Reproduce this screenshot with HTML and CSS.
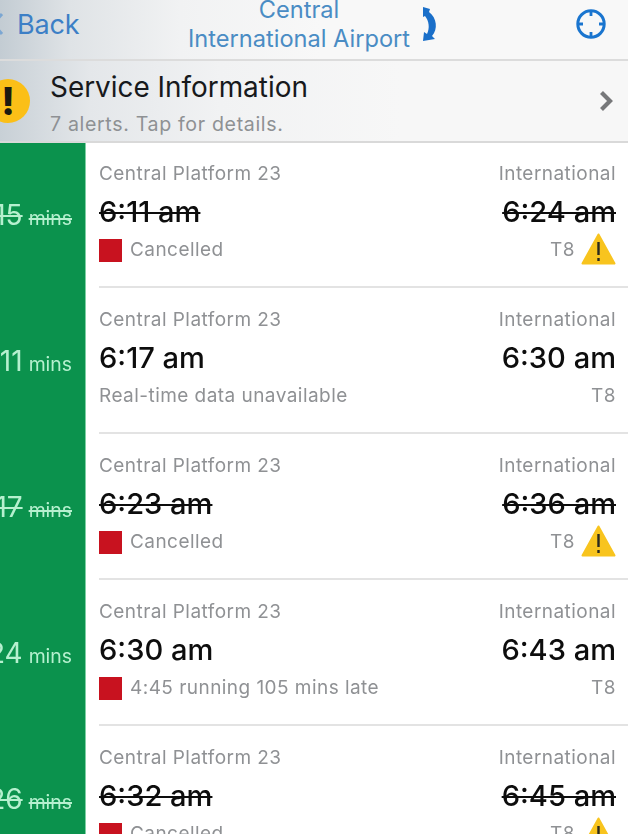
FILE: index.html
```html
<!DOCTYPE html>
<html lang="en">
<head>
<meta charset="utf-8">
<title>Central to International Airport</title>
<link rel="stylesheet" href="styles.css">
</head>
<body>
<div class="page">
  <header class="nav">
    <div class="back">
      <svg class="back-chevron" width="8" height="30" viewBox="0 0 8 30"><path d="M2 5 L-7 15 L2 25" fill="none" stroke="#7ba6d2" stroke-width="3"/></svg>
      <span>Back</span>
    </div>
    <div class="title-wrap">
      <div class="title"><span>Central</span><span>International Airport</span></div>
      <svg class="swap" width="16" height="36" viewBox="0 0 16 36"><path d="M1 1 L8 3 L7 6 C15 12 16 23 10 30 L13 33 L1 35 L2 26 L5 28 C8 22 7 15 3 10 L1 11 Z" fill="#1a6fc9"/></svg>
    </div>
    <svg class="locate" width="32" height="32" viewBox="0 0 32 32"><circle cx="16" cy="16" r="13.2" fill="none" stroke="#1a75cf" stroke-width="3"/><path d="M16 2 V8 M16 24 V30 M2 16 H8 M24 16 H30" stroke="#1a75cf" stroke-width="2.8"/></svg>
  </header>
  <section class="service">
    <div class="alert-icon">!</div>
    <div class="service-text">
      <div class="service-title">Service Information</div>
      <div class="service-sub">7 alerts. Tap for details.</div>
    </div>
    <svg class="chevron" width="14" height="22" viewBox="0 0 14 22"><path d="M2.5 2.5 L11 11 L2.5 19.5" fill="none" stroke="#77787a" stroke-width="4.2"/></svg>
  </section>
  <main class="list">
    <article class="row">
      <div class="mins cancelled"><b>15</b> <small>mins</small></div>
      <div class="info">
        <div class="line small"><span>Central Platform 23</span><span>International</span></div>
        <div class="line time cancelled"><span>6:11 am</span><span>6:24 am</span></div>
        <div class="line small status">
          <span class="stat"><i class="square"></i>Cancelled</span>
          <span class="stat">T8<svg class="warn" width="35" height="32" viewBox="0 0 35 32"><path d="M17.5 1.5 L33.5 30.5 H1.5 Z" fill="#f8c41e" stroke="#f8c41e" stroke-width="2" stroke-linejoin="round"/><path d="M17.5 9 V22 M17.5 25 V28" stroke="#2a2a20" stroke-width="2.4"/></svg></span>
        </div>
      </div>
    </article>
    <article class="row">
      <div class="mins"><b>11</b> <small>mins</small></div>
      <div class="info">
        <div class="line small"><span>Central Platform 23</span><span>International</span></div>
        <div class="line time"><span>6:17 am</span><span>6:30 am</span></div>
        <div class="line small status">
          <span class="stat">Real-time data unavailable</span>
          <span class="stat">T8</span>
        </div>
      </div>
    </article>
    <article class="row">
      <div class="mins cancelled"><b>17</b> <small>mins</small></div>
      <div class="info">
        <div class="line small"><span>Central Platform 23</span><span>International</span></div>
        <div class="line time cancelled"><span>6:23 am</span><span>6:36 am</span></div>
        <div class="line small status">
          <span class="stat"><i class="square"></i>Cancelled</span>
          <span class="stat">T8<svg class="warn" width="35" height="32" viewBox="0 0 35 32"><path d="M17.5 1.5 L33.5 30.5 H1.5 Z" fill="#f8c41e" stroke="#f8c41e" stroke-width="2" stroke-linejoin="round"/><path d="M17.5 9 V22 M17.5 25 V28" stroke="#2a2a20" stroke-width="2.4"/></svg></span>
        </div>
      </div>
    </article>
    <article class="row">
      <div class="mins"><b>24</b> <small>mins</small></div>
      <div class="info">
        <div class="line small"><span>Central Platform 23</span><span>International</span></div>
        <div class="line time"><span>6:30 am</span><span>6:43 am</span></div>
        <div class="line small status">
          <span class="stat"><i class="square"></i>4:45 running 105 mins late</span>
          <span class="stat">T8</span>
        </div>
      </div>
    </article>
    <article class="row">
      <div class="mins cancelled"><b>26</b> <small>mins</small></div>
      <div class="info">
        <div class="line small"><span>Central Platform 23</span><span>International</span></div>
        <div class="line time cancelled"><span>6:32 am</span><span>6:45 am</span></div>
        <div class="line small status">
          <span class="stat"><i class="square"></i>Cancelled</span>
          <span class="stat">T8<svg class="warn" width="35" height="32" viewBox="0 0 35 32"><path d="M17.5 1.5 L33.5 30.5 H1.5 Z" fill="#f8c41e" stroke="#f8c41e" stroke-width="2" stroke-linejoin="round"/><path d="M17.5 9 V22 M17.5 25 V28" stroke="#2a2a20" stroke-width="2.4"/></svg></span>
        </div>
      </div>
    </article>
  </main>
</div>
</body>
</html>
```
FILE: styles.css
```css
html, body {
  margin: 0;
  padding: 0;
  height: 100%;
  overflow: hidden;
  background: #fff;
}

.page {
  width: 628px;
  height: 834px;
  overflow: hidden;
  font-family: Inter, "Liberation Sans", sans-serif;
  filter: blur(0.45px);
}

.nav {
  height: 61px;
  box-sizing: border-box;
  display: flex;
  align-items: flex-start;
  background: linear-gradient(90deg, #c3ccd3 0, #dfe3e6 70px, #f1f2f3 180px, #f8f8f8 320px);
  border-bottom: 2px solid #dcdcdc;
  padding-right: 21px;
  color: #3f82c8;
}

.back {
  width: 160px;
  flex: none;
  display: flex;
  align-items: center;
  gap: 9px;
  font-size: 27px;
  letter-spacing: -0.2px;
  color: #3c7fc6;
  height: 48px;
}

.back-chevron {
  flex: none;
}

.title-wrap {
  flex: 1;
  display: flex;
  align-items: flex-start;
  gap: 12px;
  padding-left: 28px;
}

.title {
  display: flex;
  flex-direction: column;
  align-items: center;
  font-size: 23.6px;
  line-height: 29px;
  color: #4a8cc4;
  margin-top: -5px;
  white-space: nowrap;
}

.swap {
  flex: none;
  margin-top: 6px;
}

.locate {
  flex: none;
  margin-top: 8px;
}

.service {
  height: 82px;
  box-sizing: border-box;
  display: flex;
  align-items: flex-start;
  background: linear-gradient(90deg, #c8d0d6 0, #e4e7ea 90px, #f1f2f3 220px, #f7f7f7 400px);
  border-bottom: 2px solid #d9d9d9;
  padding-right: 15px;
}

.alert-icon {
  flex: none;
  width: 44px;
  height: 44px;
  margin: 18px 0 0 -14px;
  border-radius: 50%;
  background: #fbbf17;
  color: #1c1a10;
  font-size: 38px;
  font-weight: 800;
  line-height: 44px;
  text-align: center;
}

.service-text {
  flex: 1;
  margin-left: 20px;
  padding-top: 9px;
}

.service-title {
  font-size: 27.9px;
  line-height: 34px;
  color: #17191c;
}

.service-sub {
  font-size: 19.6px;
  line-height: 24px;
  margin-top: 8px;
  letter-spacing: 0.65px;
  color: #8e9194;
}

.chevron {
  flex: none;
  margin-top: 29px;
}

.list {
  display: flex;
  flex-direction: column;
}

.row {
  display: flex;
  height: 146px;
  flex: none;
}

.mins {
  flex: none;
  width: 86px;
  box-sizing: border-box;
  border-right: 1px solid #7fd0a4;
  background: #0b924d;
  color: #b6f0cf;
  display: flex;
  justify-content: flex-end;
  align-items: baseline;
  gap: 6px;
  padding: 55px 13px 0 0;
  white-space: nowrap;
}

.mins b {
  font-size: 28px;
  font-weight: 400;
}

.mins small {
  font-size: 19.4px;
}

.mins.cancelled b,
.mins.cancelled small {
  text-decoration: line-through;
  text-decoration-thickness: 1.5px;
}

.info {
  flex: 1;
  min-width: 0;
  margin-left: 13px;
  padding: 19px 12px 0 0;
  border-bottom: 2px solid #e3e3e3;
  box-sizing: border-box;
  height: 145px;
}

.line {
  display: flex;
  justify-content: space-between;
  align-items: center;
}

.small {
  font-size: 19px;
  line-height: 24px;
  letter-spacing: 0.45px;
  color: #8f9194;
}

.time {
  font-size: 29.1px;
  font-weight: 450;
  line-height: 34px;
  margin-top: 9px;
  color: #0d0d0d;
}

.time.cancelled span {
  text-decoration: line-through;
  text-decoration-thickness: 2.4px;
}

.status {
  margin-top: 5px;
  height: 32px;
}

.stat {
  display: flex;
  align-items: center;
  gap: 6px;
}

.square {
  display: block;
  width: 23px;
  height: 23px;
  margin-right: 2px;
  background: #c8121f;
}

.warn {
  flex: none;
  margin-top: -3px;
}
```
